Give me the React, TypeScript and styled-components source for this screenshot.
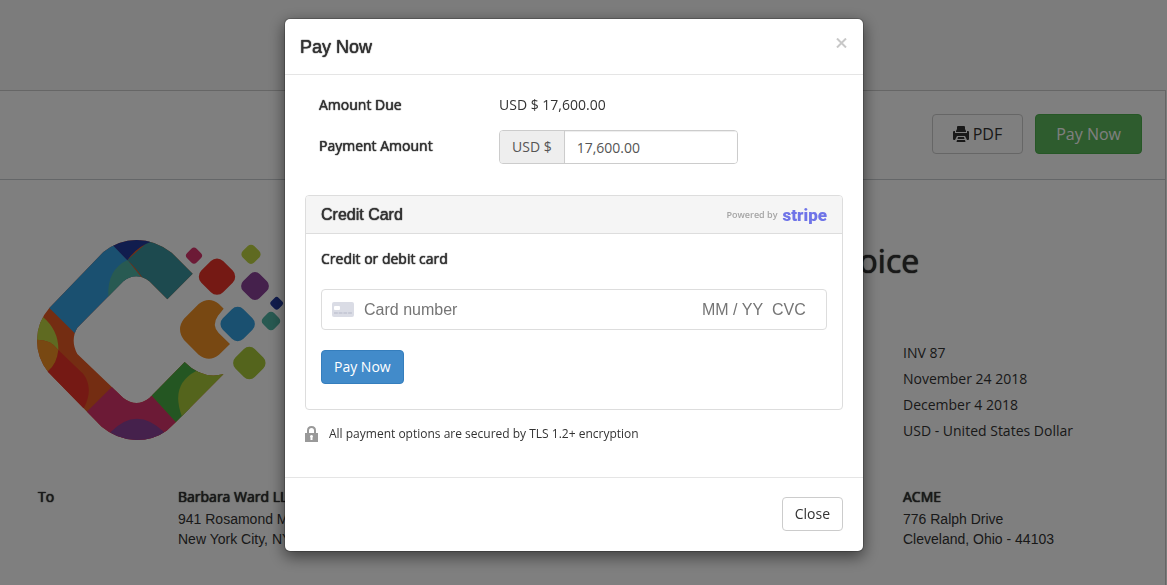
import React from "react";
import styled, { createGlobalStyle } from "styled-components";

const body = `"Open Sans", "Noto Sans", sans-serif`;
const plain = `"Liberation Sans", Arial, sans-serif`;
const emphasis = "0 0 1px currentColor, 0 0 1px currentColor";

const GlobalStyle = createGlobalStyle`
  *, *::before, *::after { box-sizing: border-box; }
  html, body { margin: 0; height: 100%; overflow: hidden; }
  body { font: 14px/20px ${body}; color: #333; background: #fff; }
  button, input { font: inherit; color: inherit; margin: 0; }
  h1, h2, h3, p, ul, address { margin: 0; padding: 0; font: inherit; list-style: none; }
`;

const Page = styled.div`
  min-height: 100vh;
  display: flex;
  flex-direction: column;
  padding-right: 1px;
  background: #f9f9f9;
`;
const TopBand = styled.header`
  height: 90px;
`;
const InvoicePanel = styled.main`
  flex: 1;
  background: #fff;
  border: 1px solid #ccc;
  border-width: 1px 1px 0 0;
`;
const Toolbar = styled.div`
  display: flex;
  justify-content: flex-end;
  gap: 12px;
  padding: 23px 23px 25px;
  border-bottom: 1px solid #c8ccd0;
`;
const Button = styled.button<{ $tone?: "blue" | "green"; $large?: boolean }>`
  display: inline-flex;
  align-items: center;
  justify-content: center;
  gap: 4px;
  height: ${(p) => (p.$large ? 40 : 34)}px;
  padding: 0 ${(p) => (p.$large ? 20 : 12)}px;
  font-size: ${(p) => (p.$large ? 16 : 14)}px;
  border: 1px solid ${(p) => (p.$tone === "blue" ? "#357ebd" : p.$tone === "green" ? "#4cae4c" : "#ccc")};
  border-radius: 4px;
  color: ${(p) => (p.$tone ? "#fff" : "#333")};
  background: ${(p) => (p.$tone === "blue" ? "#428bca" : p.$tone === "green" ? "#5cb85c" : "#fff")};
`;
const InvoiceHead = styled.section`
  display: flex;
  justify-content: space-between;
  padding: 60px 0 0 37px;
`;
const Meta = styled.div`
  width: 351px;
`;
const InvoiceTitle = styled.h1`
  font-size: 32px;
  line-height: 42px;
  text-shadow: ${emphasis};
`;
const MetaList = styled.ul`
  padding: 58px 0 0 89px;
  line-height: 26px;
`;
const Parties = styled.section`
  display: grid;
  grid-template-columns: 140px 1fr 262px;
  padding: 43px 0 0 38px;
`;
const Strong = styled.strong`
  display: block;
  font-weight: 400;
  text-shadow: ${emphasis};
`;
const Address = styled.address`
  font-style: normal;
  line-height: 20px;
  p { font-family: ${plain}; }
  ${Strong} { line-height: 20px; padding-bottom: 2px; }
`;

const Overlay = styled.div`
  position: fixed;
  inset: 0;
  display: flex;
  justify-content: center;
  align-items: flex-start;
  padding: 18px 19px 0 0;
  background: rgba(0, 0, 0, 0.5);
`;
const Dialog = styled.div`
  width: 100%;
  max-width: 580px;
  background: #fff;
  background-clip: padding-box;
  border: 1px solid rgba(0, 0, 0, 0.2);
  border-radius: 6px;
  box-shadow: 0 5px 15px rgba(0, 0, 0, 0.5);
`;
const DialogHeader = styled.div`
  display: flex;
  justify-content: space-between;
  align-items: flex-start;
  padding: 16px 15px 14px;
  border-bottom: 1px solid #e5e5e5;
`;
const DialogTitle = styled.h2`
  font: 18px/25px ${plain};
  text-shadow: ${emphasis};
`;
const CloseIcon = styled.button`
  display: flex;
  padding: 3px 0;
  border: 0;
  background: none;
`;
const DialogBody = styled.div`
  padding: 20px 20px 33px;
`;
const FormRow = styled.div`
  display: grid;
  grid-template-columns: 180px 1fr;
  padding-left: 14px;
`;
const Label = styled.label`
  line-height: 20px;
  text-shadow: ${emphasis};
`;
const PaymentRow = styled(FormRow)`
  padding-top: 15px;
  ${Label} { padding-top: 6px; }
`;
const InputGroup = styled.div`
  display: flex;
  width: 239px;
  height: 34px;
  border: 1px solid #ccc;
  border-radius: 4px;
  color: #555;
  overflow: hidden;
`;
const Addon = styled.span`
  padding: 6px 12px;
  background: #eee;
  border-right: 1px solid #ccc;
`;
const AmountInput = styled.input`
  flex: 1;
  min-width: 0;
  padding: 2px 12px 0;
  border: 0;
  outline: 0;
  color: #555;
  box-shadow: inset 0 1px 1px rgba(0, 0, 0, 0.075);
`;
const CardPanel = styled.section`
  margin-top: 31px;
  border: 1px solid #ddd;
  border-radius: 4px;
`;
const CardHeading = styled.div`
  display: flex;
  align-items: center;
  justify-content: space-between;
  height: 38px;
  padding: 1px 15px 0;
  background: #f5f5f5;
  border-bottom: 1px solid #ddd;
  border-radius: 3px 3px 0 0;
`;
const CardTitle = styled.h3`
  font: 16px/20px ${plain};
  text-shadow: ${emphasis};
`;
const Powered = styled.span`
  display: flex;
  align-items: center;
  gap: 5px;
  font-size: 9px;
  font-weight: 600;
  color: #a5a5a5;
`;
const Stripe = styled.span`
  font: 900 17px/20px Roboto, sans-serif;
  color: #6f74e8;
`;
const CardForm = styled.form`
  display: flex;
  flex-direction: column;
  align-items: flex-start;
  gap: 20px;
  padding: 15px 15px 25px;
`;
const CardBox = styled.div`
  display: flex;
  align-items: center;
  align-self: stretch;
  height: 41px;
  padding: 0 16px 0 10px;
  border: 1px solid #ddd;
  border-radius: 4px;
`;
const CardInput = styled.input<{ $w?: number }>`
  flex: ${(p) => (p.$w ? "none" : "1")};
  width: ${(p) => (p.$w ? `${p.$w}px` : "auto")};
  min-width: 0;
  padding: 0;
  border: 0;
  outline: 0;
  background: none;
  font: 16px/20px ${plain};
  &::placeholder { color: #757575; }
  svg + & { margin-left: 10px; }
`;
const Secure = styled.p`
  && {
    display: flex;
    align-items: center;
    gap: 10px;
    margin-top: 14px;
    font-size: 12px;
  }
`;
const DialogFooter = styled.div`
  display: flex;
  justify-content: flex-end;
  padding: 19px 20px 20px;
  border-top: 1px solid #e5e5e5;
`;

const Logo = () => (
  <svg width="247" height="200" viewBox="51 30 741 600" role="img" aria-label="Company logo">
    <defs>
      <clipPath id="ring">
        <path d="M518 131L442 208L388 154Q348 124 310 154L172 293Q150 330 172 372L310 504Q350 534 388 504L494 396Q546 449 611 432L468 576L440 602Q400 630 350 630Q290 628 245 590L85 427Q51 385 51 330Q52 275 88 234L250 66Q295 30 350 30Q405 30 455 68Z" />
      </clipPath>
    </defs>
    <g clipPath="url(#ring)">
      <rect x="40" y="20" width="600" height="620" fill="#e85a24" />
      <path d="M88 234L50 196L230 16L280 46L322 90L370 150L320 220L200 345L163 308Z" fill="#34a0e0" />
      <path d="M322 90Q260 120 265 200L290 230L370 150Z" fill="#50b4a4" />
      <path d="M322 90L390 30L420 10L560 90V131L442 230L372 150Q350 115 322 90Z" fill="#3a959e" />
      <path d="M250 16L322 91Q350 50 392 36V16Z" fill="#233a9c" />
      <path d="M68 260Q116 300 115 360Q90 325 40 330V260Z" fill="#bfd542" />
      <path d="M40 330Q90 325 115 360Q112 400 84 424L40 440Z" fill="#f09024" />
      <path d="M115 360L190 432Q222 475 192 534L150 540L70 436L84 424Q112 400 115 360Z" fill="#ea3328" />
      <path d="M202 544L276 470L350 490L396 498L468 576L450 660H220L180 566Z" fill="#d8356c" />
      <path d="M272 606Q350 526 432 606L450 650H250Z" fill="#8a4298" />
      <path d="M396 498L380 480L490 380L540 424L500 570L480 590Z" fill="#49ad45" />
      <path d="M527 424Q450 465 486 560L500 580L650 420Z" fill="#a8c838" />
    </g>
    <path d="M611 236Q600 225 597 222Q567 198 536 222L492 266Q468 297 492 330L536 374Q567 398 597 374L630 342L596 309Q574 285 594 257Z" fill="#f09024" />
    {[
      [522, 77, 24, "#d8356c"], [591, 140, 55, "#ea3328"], [693, 73, 29, "#bfd542"],
      [705, 168, 42, "#8a4298"], [770, 220, 19, "#233a9c"], [753, 273, 28, "#50b4a4"],
      [653, 282, 52, "#34a0e0"], [688, 399, 49, "#a8c838"],
    ].map(([x, y, r, fill]) => {
      const h = Number(r) * 0.84;
      return (
        <rect key={`${x}`} x={Number(x) - h} y={Number(y) - h} width={h * 2} height={h * 2} rx={h * 0.56} fill={String(fill)} transform={`rotate(45 ${x} ${y})`} />
      );
    })}
  </svg>
);

const Printer = () => (
  <svg width="16" height="16" viewBox="0 0 16 16" fill="#333" aria-hidden="true">
    <path d="M5 0H11Q12 0 12 1V3L13 5V6H3V5L4 3V1Q4 0 5 0Z" />
    <path d="M0 6Q0 5 1 5H2V7H14V5H15Q16 5 16 6V13Q16 14 15 14H14L12 10H4L2 14H1Q0 14 0 13Z" />
    <path d="M5 11H11L11.500 13H4.500ZM4 14H12L12.500 16H3.500Z" />
  </svg>
);

const CardGlyph = () => (
  <svg width="22" height="15" viewBox="0 0 22 15" aria-hidden="true">
    <rect width="22" height="15" rx="2" fill="#dadce5" />
    <rect x="2" y="4" width="6" height="4" rx="1" fill="#fff" />
    <path d="M2 11H20" stroke="#b5b8c8" strokeDasharray="3.8 0.9" />
  </svg>
);

const Lock = () => (
  <svg width="14" height="16" viewBox="0 0 14 16" aria-hidden="true">
    <path d="M3 8V4.500Q3 1 6.500 1Q10 1 10 4.500V8" fill="none" stroke="#999" strokeWidth="2" />
    <rect y="7" width="13" height="9" fill="#999" />
    <path d="M6.500 9a1.500 1.500 0 0 1 1 2.600V14h-2v-2.400a1.500 1.500 0 0 1 1-2.600z" fill="#fff" />
  </svg>
);

export default function App() {
  return (
    <>
      <GlobalStyle />
      <Page>
        <TopBand />
        <InvoicePanel>
          <Toolbar>
            <Button $large><Printer />PDF</Button>
            <Button $large $tone="green">Pay Now</Button>
          </Toolbar>
          <InvoiceHead>
            <Logo />
            <Meta>
              <InvoiceTitle>Invoice</InvoiceTitle>
              <MetaList>
                <li>INV 87</li>
                <li>November 24 2018</li>
                <li>December 4 2018</li>
                <li>USD - United States Dollar</li>
              </MetaList>
            </Meta>
          </InvoiceHead>
          <Parties>
            <Strong>To</Strong>
            <Address>
              <Strong>Barbara Ward LLC</Strong>
              <p>941 Rosamond M</p>
              <p>New York City, NY</p>
            </Address>
            <Address>
              <Strong>ACME</Strong>
              <p>776 Ralph Drive</p>
              <p>Cleveland, Ohio - 44103</p>
            </Address>
          </Parties>
        </InvoicePanel>
      </Page>
      <Overlay>
        <Dialog role="dialog" aria-modal="true" aria-labelledby="pay-title">
          <DialogHeader>
            <DialogTitle id="pay-title">Pay Now</DialogTitle>
            <CloseIcon type="button" aria-label="Close dialog">
              <svg width="12" height="10" viewBox="0 0 12 10" stroke="#c8c8c8" strokeWidth="2"><path d="M1 0.500L10 9.500M10 0.500L1 9.500" /></svg>
            </CloseIcon>
          </DialogHeader>
          <DialogBody>
            <FormRow>
              <Label as="span">Amount Due</Label>
              <span>USD $ 17,600.00</span>
            </FormRow>
            <PaymentRow>
              <Label htmlFor="amount">Payment Amount</Label>
              <InputGroup>
                <Addon>USD $</Addon>
                <AmountInput id="amount" defaultValue="17,600.00" />
              </InputGroup>
            </PaymentRow>
            <CardPanel>
              <CardHeading>
                <CardTitle>Credit Card</CardTitle>
                <Powered>Powered by <Stripe>stripe</Stripe></Powered>
              </CardHeading>
              <CardForm onSubmit={(e) => e.preventDefault()}>
                <Label htmlFor="card-number">Credit or debit card</Label>
                <CardBox>
                  <CardGlyph />
                  <CardInput id="card-number" placeholder="Card number" />
                  <CardInput $w={70} aria-label="Expiry date" placeholder="MM / YY" />
                  <CardInput $w={38} aria-label="Security code" placeholder="CVC" />
                </CardBox>
                <Button $tone="blue">Pay Now</Button>
              </CardForm>
            </CardPanel>
            <Secure><Lock />All payment options are secured by TLS 1.2+ encryption</Secure>
          </DialogBody>
          <DialogFooter>
            <Button type="button">Close</Button>
          </DialogFooter>
        </Dialog>
      </Overlay>
    </>
  );
}
